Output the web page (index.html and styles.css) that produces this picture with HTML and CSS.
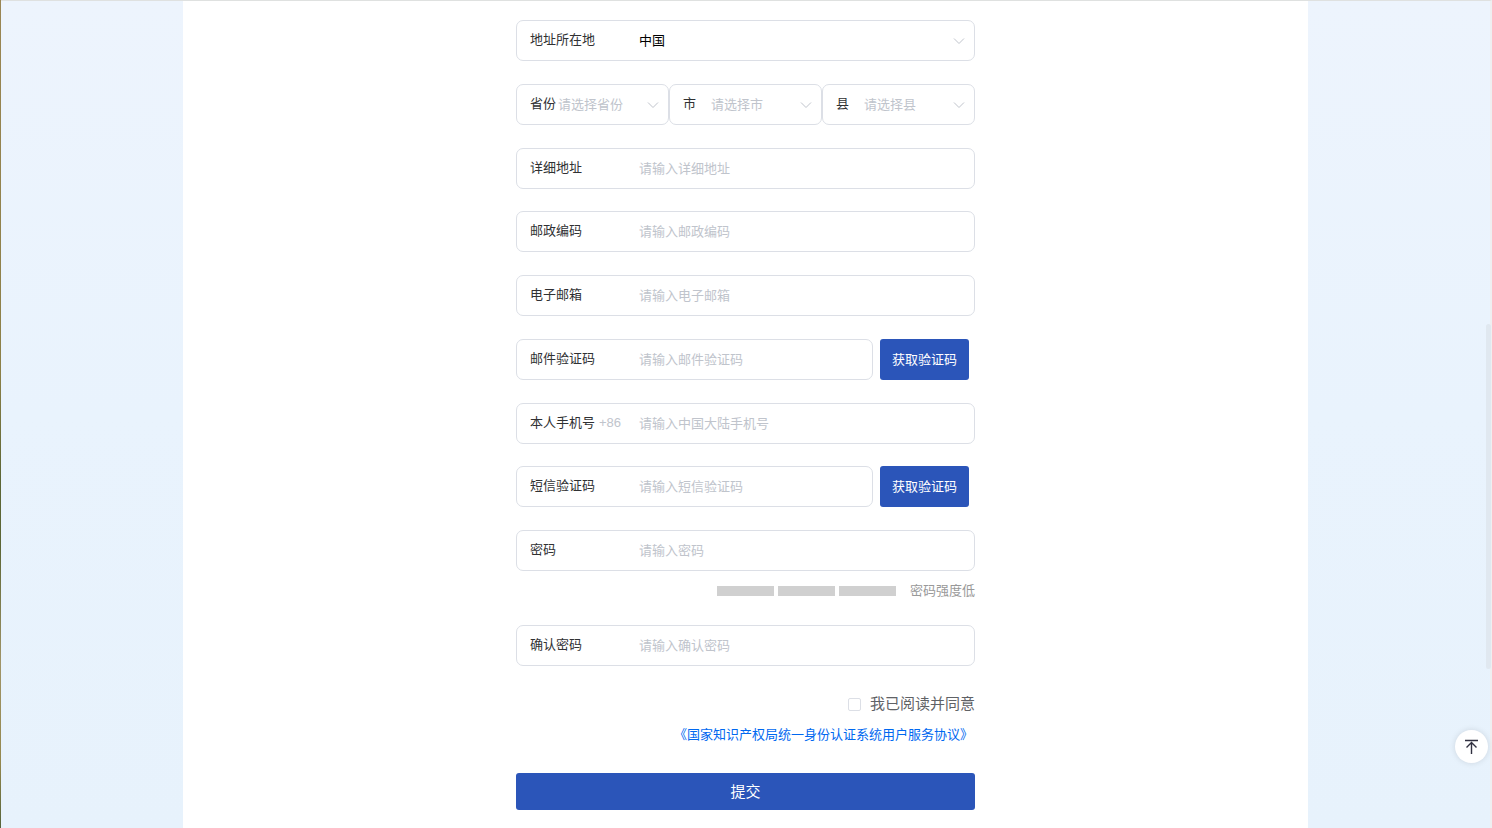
FILE: index.html
```html
<!DOCTYPE html>
<html lang="zh-CN">
<head>
    <meta charset="UTF-8">
    <meta name="viewport" content="width=device-width, initial-scale=1.0">
    <title>用户注册</title>
    <link rel="stylesheet" href="styles.css">
</head>
<body>
    <main class="panel">
        <form class="register-form" onsubmit="return false">
            <div class="group">
                <div class="field">
                    <label for="country">地址所在地</label>
                    <select id="country" class="chosen">
                        <option>中国</option>
                    </select>
                    <svg class="arrow" viewBox="0 0 12 12"><path d="M1 3.5 6 8.5 11 3.5"/></svg>
                </div>
                <div class="region">
                    <div class="field short">
                        <label for="province">省份</label>
                        <select id="province"><option>请选择省份</option></select>
                        <svg class="arrow" viewBox="0 0 12 12"><path d="M1 3.5 6 8.5 11 3.5"/></svg>
                    </div>
                    <div class="field short">
                        <label for="city">市</label>
                        <select id="city"><option>请选择市</option></select>
                        <svg class="arrow" viewBox="0 0 12 12"><path d="M1 3.5 6 8.5 11 3.5"/></svg>
                    </div>
                    <div class="field short">
                        <label for="county">县</label>
                        <select id="county"><option>请选择县</option></select>
                        <svg class="arrow" viewBox="0 0 12 12"><path d="M1 3.5 6 8.5 11 3.5"/></svg>
                    </div>
                </div>
                <div class="field">
                    <label for="address">详细地址</label>
                    <input type="text" id="address" placeholder="请输入详细地址">
                </div>
            </div>

            <div class="group">
                <div class="field">
                    <label for="postcode">邮政编码</label>
                    <input type="text" id="postcode" placeholder="请输入邮政编码">
                </div>
                <div class="field">
                    <label for="email">电子邮箱</label>
                    <input type="email" id="email" placeholder="请输入电子邮箱">
                </div>
                <div class="code-row">
                    <div class="field">
                        <label for="emailCode">邮件验证码</label>
                        <input type="text" id="emailCode" placeholder="请输入邮件验证码">
                    </div>
                    <button type="button" class="btn code-btn">获取验证码</button>
                </div>
                <div class="field">
                    <label for="phone">本人手机号<span class="prefix">+86</span></label>
                    <input type="tel" id="phone" placeholder="请输入中国大陆手机号">
                </div>
            </div>

            <div class="group">
                <div class="code-row">
                    <div class="field">
                        <label for="smsCode">短信验证码</label>
                        <input type="text" id="smsCode" placeholder="请输入短信验证码">
                    </div>
                    <button type="button" class="btn code-btn">获取验证码</button>
                </div>
                <div class="field">
                    <label for="password">密码</label>
                    <input type="password" id="password" placeholder="请输入密码">
                </div>
            </div>

            <div class="strength">
                <span class="bar"></span>
                <span class="bar"></span>
                <span class="bar"></span>
                <span class="strength-text">密码强度低</span>
            </div>

            <div class="field">
                <label for="confirm">确认密码</label>
                <input type="password" id="confirm" placeholder="请输入确认密码">
            </div>

            <div class="agree">
                <input type="checkbox" id="agree">
                <label for="agree">我已阅读并同意</label>
            </div>
            <a class="agreement" href="#">《国家知识产权局统一身份认证系统用户服务协议》</a>

            <button type="submit" class="btn submit-btn">提交</button>
        </form>
    </main>

    <button type="button" class="back-top" aria-label="返回顶部">
        <svg viewBox="0 0 15 15"><path d="M1 1.5H14M7.5 15V4M2.5 8.5 7.5 3.5 12.5 8.5"/></svg>
    </button>
    <div class="scroll-thumb"></div>
    <div class="left-edge"></div>
</body>
</html>
```

FILE: styles.css
```css
* {
    box-sizing: border-box;
}

body {
    margin: 0;
    min-height: 100vh;
    display: flex;
    justify-content: center;
    border-top: 1px solid #dfe1e0;
    border-right: 2px solid #efeff1;
    border-left: 1px solid #edf4fd;
    background: linear-gradient(#edf4fd, #e9f3fd 50%, #e7f2fc);
    font-family: "Noto Sans CJK SC", sans-serif;
    font-size: 13px;
    color: #303133;
}

input,
select,
button {
    font: inherit;
}

.panel {
    width: 100%;
    max-width: 1125px;
    background: #fff;
}

.register-form {
    display: flex;
    flex-direction: column;
    width: 100%;
    max-width: 459px;
    margin: 0 auto;
    padding: 19px 0 18px;
}

.group {
    display: flex;
    flex-direction: column;
    gap: 23px;
    margin-bottom: 22px;
}

.group:nth-of-type(3) {
    margin-bottom: 0;
}

/* label and control share one bordered box */
.field {
    display: flex;
    align-items: center;
    flex: 1;
    min-width: 0;
    height: 41px;
    min-height: 41px;
    padding: 0 9px 0 13px;
    border: 1px solid #dcdfe6;
    border-radius: 7px;
}

.field label {
    flex: none;
    width: 109px;
    line-height: 20px;
    padding-bottom: 3px;
}

.prefix {
    margin-left: 4px;
    font-family: "Liberation Sans", sans-serif;
    color: #c0c4cc;
}

.field input,
.field select {
    flex: 1;
    width: 0;
    min-width: 0;
    height: 36px;
    padding: 0 0 2px;
    border: 0;
    outline: none;
    background: none;
    color: #303133;
}

.field select {
    appearance: none;
    color: #c0c4cc;
}

.field select.chosen {
    color: #000;
}

.field input::placeholder {
    color: #c0c4cc;
}

.arrow {
    flex: none;
    width: 12px;
    height: 12px;
    fill: none;
    stroke: #c0c4cc;
    pointer-events: none;
}

.region {
    display: flex;
}

.short label {
    width: 28px;
}

.code-row {
    display: flex;
    gap: 7px;
    padding-right: 6px;
}

.btn {
    border: 0;
    border-radius: 3px;
    padding: 0 0 2px;
    background: #2b55b9;
    color: #fff;
    cursor: pointer;
}

.code-btn {
    width: 89px;
}

.strength {
    display: flex;
    align-items: center;
    justify-content: flex-end;
    gap: 4px;
    height: 20px;
    margin: 10px 0 24px;
    color: #999;
}

.bar {
    width: 57px;
    height: 10px;
    background: #d0d0d0;
}

.strength-text {
    margin-left: 10px;
    padding-bottom: 3px;
}

.agree {
    display: flex;
    align-items: center;
    justify-content: flex-end;
    gap: 9px;
    height: 24px;
    margin-top: 26px;
    font-size: 15px;
    line-height: 24px;
    color: #606266;
}

.agree label {
    padding-bottom: 2px;
}

.agree input {
    appearance: none;
    width: 13px;
    height: 13px;
    margin: 0;
    border: 1px solid #dcdfe6;
    border-radius: 2px;
    background: #fff;
}

.agreement {
    align-self: flex-end;
    margin-top: 8px;
    padding-right: 2px;
    line-height: 20px;
    color: #0068f0;
    text-decoration: none;
}

.submit-btn {
    height: 37px;
    margin-top: 29px;
    font-size: 15px;
}

.back-top {
    position: fixed;
    right: 4px;
    bottom: 65px;
    display: flex;
    align-items: center;
    justify-content: center;
    width: 33px;
    height: 33px;
    padding: 0;
    border: 0;
    border-radius: 50%;
    background: #fff;
    box-shadow: 0 0 6px rgba(0, 0, 0, .12);
    cursor: pointer;
}

.back-top svg {
    width: 15px;
    height: 15px;
    fill: none;
    stroke: #303040;
    stroke-width: 1.4;
}

.scroll-thumb {
    position: fixed;
    top: 324px;
    right: 1px;
    width: 5px;
    height: 345px;
    border-radius: 3px;
    background: #e0e8f0;
}

.left-edge {
    position: fixed;
    top: 0;
    bottom: 0;
    left: 0;
    width: 1px;
    background: linear-gradient(#9a8654, #8c8048 45%, #5c6636 58%, #5c6636 66%, #a09468 80%, #94884f 92%, #55633a);
}
```
